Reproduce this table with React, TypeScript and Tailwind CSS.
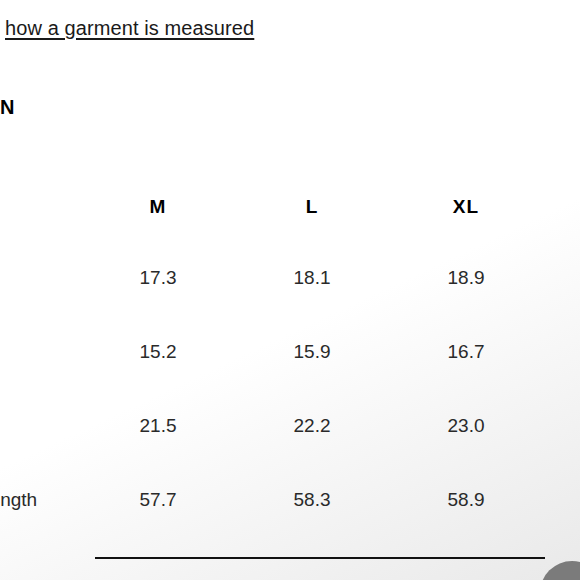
const sizes = ['M', 'L', 'XL'];

const rows = [
  { label: '', values: ['17.3', '18.1', '18.9'] },
  { label: '', values: ['15.2', '15.9', '16.7'] },
  { label: '', values: ['21.5', '22.2', '23.0'] },
  { label: 'Length', values: ['57.7', '58.3', '58.9'] },
];

export default function App() {
  return (
    <div className="relative w-[580px] h-[580px] overflow-hidden bg-[linear-gradient(155deg,#ffffff_55%,#e9e9e9_100%)] font-['Liberation_Sans',Arial,sans-serif] text-[#222]">
      <div className="pt-[16px] pl-[5px]">
        <a href="#" className="text-[20px] leading-[24px] tracking-[0.1px] underline underline-offset-[3px] decoration-[1.5px] text-[#1a1a1a]">
          how a garment is measured
        </a>
      </div>

      {/* heading, cut at the left edge */}
      <h2 className="mt-[53px] text-[20px] leading-[24px] font-bold text-black">N</h2>

      <div className="mt-[76px] flex flex-col">
        <div className="flex h-[24px] items-center leading-[24px]">
          <div className="ml-[-21px] w-[102px]" />
          {sizes.map((s) => (
            <div key={s} className="w-[154px] text-center text-[19px] font-bold tracking-[1px] text-black">
              {s}
            </div>
          ))}
        </div>
        {rows.map((r, i) => (
          <div key={i} className={`flex h-[24px] items-center leading-[24px] text-[19px] ${i === 0 ? 'mt-[47px]' : 'mt-[50px]'}`}>
            <div className="ml-[-21px] w-[102px] whitespace-nowrap text-[#2a2a2a]">{r.label}</div>
            {r.values.map((v, j) => (
              <div key={j} className="w-[154px] text-center text-[#2a2a2a]">
                {v}
              </div>
            ))}
          </div>
        ))}
      </div>

      <div className="mt-[45px] ml-[95px] w-[450px] h-[2px] bg-[#111]" />

      {/* floating button peeking in the corner */}
      <div className="absolute left-[540px] top-[561px] w-[64px] h-[64px] rounded-full bg-[#7b7b7b]" />
    </div>
  );
}
